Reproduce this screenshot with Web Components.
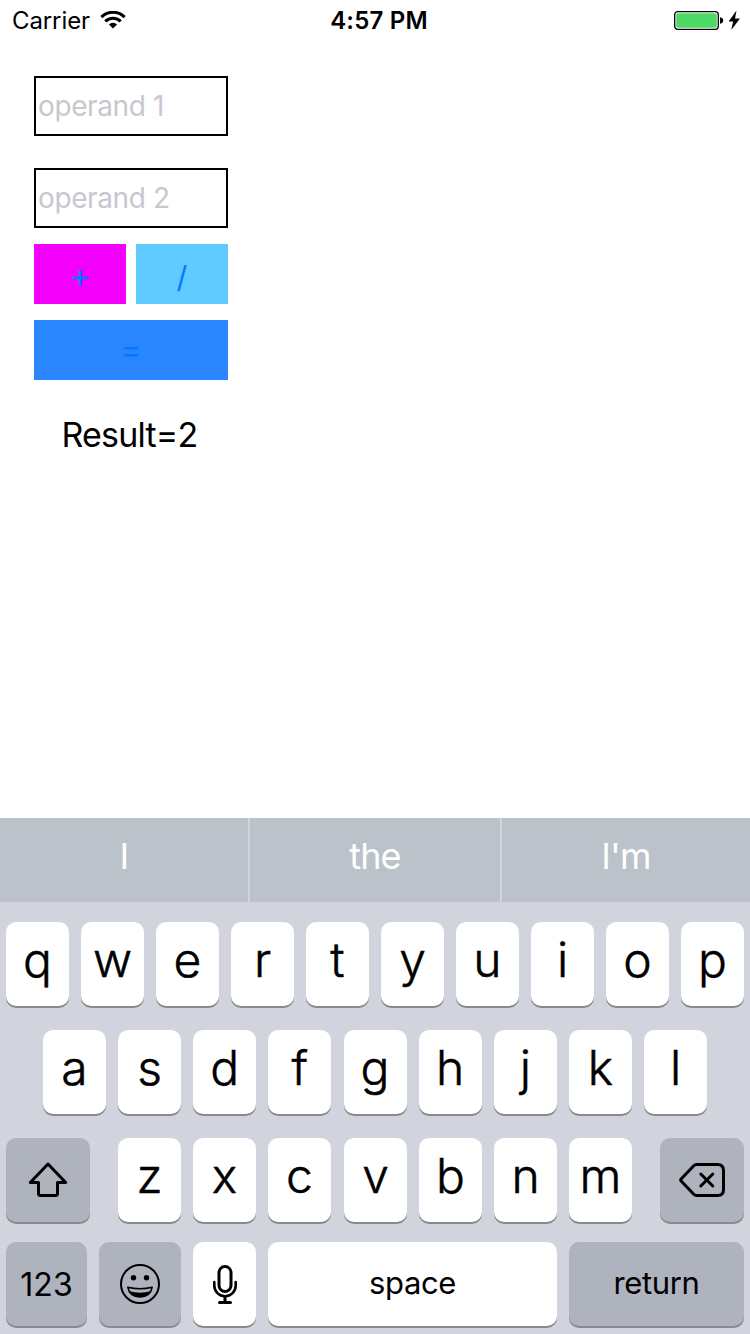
<!DOCTYPE html>
<html lang="en">
<head>
<meta charset="utf-8">
<title>Calculator</title>
<style>
html, body { margin: 0; padding: 0; background: #fff; }
body { width: 750px; height: 1334px; overflow: hidden; font-family: Inter, "Liberation Sans", sans-serif; color: #000; }
</style>
</head>
<body>
<calc-app></calc-app>
<script>
function define(name, html) {
  const template = document.createElement('template');
  template.innerHTML = html;
  customElements.define(name, class extends HTMLElement {
    constructor() {
      super();
      this.attachShadow({ mode: 'open' }).appendChild(template.content.cloneNode(true));
    }
  });
}

define('status-bar', `
<style>
:host { display: grid; grid-template-columns: 1fr auto 1fr; align-items: center; height: 40px; padding: 0 10px 0 12px; box-sizing: border-box; font-size: 24px; line-height: 38px; }
.left, .right { display: flex; align-items: center; }
.right { justify-content: flex-end; }
.carrier { letter-spacing: -0.1px; padding-top: 2px; }
.time { font-weight: 600; letter-spacing: 0.2px; padding: 2px 0 0 6px; }
.wifi { margin-left: 10px; }
svg { display: block; }
</style>
<div class="left"><span class="carrier">Carrier</span>
<svg class="wifi" width="26" height="18" viewBox="0 0 26 18"><g fill="none" stroke="#000" stroke-width="3"><path d="M1.4 6.1A16.2 16.2 0 0 1 24.6 6.1"/><path d="M5.3 10.4A10.8 10.8 0 0 1 20.7 10.4"/></g><path d="M13 17.6L8.9 13.4A6 6 0 0 1 17.1 13.4Z"/></svg></div>
<span class="time">4:57 PM</span>
<div class="right"><svg width="67" height="20" viewBox="0 0 67 20"><rect x="1.7" y="1.7" width="43.6" height="17.6" rx="3" fill="#fff" stroke="#000" stroke-width="1.3"/><rect x="3.2" y="3.2" width="40.6" height="14.6" rx="1.8" fill="#4cd964"/><path d="M47 7.2C49.6 7.4 50.2 9 50.2 10.4S49.6 13.4 47 13.7Z"/><path d="M63.5.5L55.6 11.5H60.2L58.2 20L67 8.6H62Z"/></svg></div>`);

define('operand-field', `
<style>
:host { display: flex; align-items: center; box-sizing: border-box; height: 60px; border: 2px solid #000; padding-left: 2px; font-size: 28px; color: #c7c7cd; letter-spacing: -0.4px; }
</style><slot></slot>`);

define('op-button', `
<style>
:host { display: flex; align-items: center; justify-content: center; height: 60px; font-size: var(--size, 32px); color: #007aff; background: var(--fill); padding-top: var(--drop, 0); padding-bottom: var(--lift, 0); box-sizing: border-box; }
</style><slot></slot>`);

define('calc-panel', `
<style>
:host { display: flex; flex-direction: column; width: 194px; margin: 36px 0 0 34px; }
operand-field + operand-field { margin-top: 32px; }
.ops { display: grid; grid-template-columns: 92px 92px; gap: 10px; margin: 16px 0; }
.result { margin-top: 32px; height: 46px; line-height: 46px; font-size: 34px; text-align: center; letter-spacing: -0.8px; white-space: nowrap; padding-right: 3px; }
</style>
<operand-field>operand 1</operand-field>
<operand-field>operand 2</operand-field>
<div class="ops"><op-button style="--fill:#f200fa;--drop:2px">+</op-button><op-button style="--fill:#5fcaff;--drop:5px;--size:30px">/</op-button></div>
<op-button style="--fill:#2a86ff;--lift:2px">=</op-button>
<div class="result">Result=2</div>`);

define('suggestion-bar', `
<style>
:host { display: grid; grid-template-columns: 248px 250px 248px; gap: 2px; height: 84px; background: #d1d4dc; }
span { background: #bbc2ca; color: #fff; font-size: 36px; line-height: 77px; text-align: center; letter-spacing: -0.9px; }
</style><span>I</span><span>the</span><span>I'm</span>`);

define('kb-key', `
<style>
:host { display: flex; align-items: center; justify-content: center; box-sizing: border-box; height: 84px; border-radius: 10px; background: #fff; box-shadow: 0 2px 0 #898a8d; font-size: 48px; font-weight: 300; -webkit-text-stroke: 0.5px #000; padding-bottom: 9px; }
:host([dark]) { background: #aeb3be; }
:host([text]) { font-size: 31px; font-weight: 400; -webkit-text-stroke: 0; padding-bottom: 3px; letter-spacing: -0.4px; }
:host([icon]) { padding: 0; }
</style><slot></slot>`);

define('icon-shift', `<style>:host, svg { display: block; }</style>
<svg width="42" height="36" viewBox="0 0 42 36" fill="none" stroke="#000" stroke-width="3" stroke-linejoin="round"><path d="M21 2L38.7 20.5H30.5V31.5Q30.5 33.5 28.5 33.5H13.5Q11.5 33.5 11.5 31.5V20.5H3.3Z"/></svg>`);
define('icon-delete', `<style>:host, svg { display: block; }</style>
<svg width="48" height="36" viewBox="0 0 48 36" fill="none" stroke="#000" stroke-width="3" stroke-linejoin="round" stroke-linecap="round"><path d="M18.5 2.5H39.5Q45.5 2.5 45.5 8.5V27.5Q45.5 33.5 39.5 33.5H18.5Q17 33.5 15.5 32L2.9 18.8Q2.2 18 2.9 17.2L15.5 4Q17 2.5 18.5 2.5Z"/><path d="M22.8 12L34.8 24M34.8 12L22.8 24"/></svg>`);
define('icon-emoji', `<style>:host, svg { display: block; }</style>
<svg width="42" height="42" viewBox="0 0 42 42"><circle cx="21" cy="21" r="19" fill="none" stroke="#000" stroke-width="2"/><circle cx="14.5" cy="14.7" r="2.7"/><circle cx="27.5" cy="14.7" r="2.7"/><path d="M8.8 24.2Q21 27.2 33.2 24.2Q31.5 34 21 34T8.8 24.2Z" fill="none" stroke="#000" stroke-width="1.6" stroke-linejoin="round"/><path d="M10 28Q21 31.5 32 28Q29 34 21 34T10 28Z"/></svg>`);
define('icon-mic', `<style>:host, svg { display: block; }</style>
<svg width="28" height="42" viewBox="0 0 28 42" fill="none" stroke="#000" stroke-width="3" stroke-linecap="round"><rect x="8" y="3.5" width="12" height="25" rx="6"/><path d="M3.3 19V22.5A10.7 10.7 0 0 0 24.7 22.5V19" stroke-width="2.6"/><path d="M14 33.5V39M8.5 39.5H19.5"/></svg>`);

define('key-board', `
<style>
:host { display: flex; flex-direction: column; height: 432px; box-sizing: border-box; padding: 20px 6px 0; gap: 24px; background: #d1d4dc; }
.row { display: grid; }
.one { grid-template-columns: repeat(10, 63px); gap: 12px; }
.two { grid-template-columns: repeat(9, 63px); justify-content: space-between; padding: 0 37px; }
.three { grid-template-columns: 84px 514px 84px; justify-content: space-between; }
.mid { display: grid; grid-template-columns: 63px 63px 64px 63px 63px 63px 63px; gap: 12px; }
.mid kb-key { width: 63px; }
.four { grid-template-columns: 81px 82px 63px 289px 175px; gap: 12px; margin-top: -4px; }
kb-key.num { font-size: 32px; padding: 1px 0 0; letter-spacing: 0; }
</style>
<div class="row one"><kb-key>q</kb-key><kb-key>w</kb-key><kb-key>e</kb-key><kb-key>r</kb-key><kb-key>t</kb-key><kb-key>y</kb-key><kb-key>u</kb-key><kb-key>i</kb-key><kb-key>o</kb-key><kb-key>p</kb-key></div>
<div class="row two"><kb-key>a</kb-key><kb-key>s</kb-key><kb-key>d</kb-key><kb-key>f</kb-key><kb-key>g</kb-key><kb-key>h</kb-key><kb-key>j</kb-key><kb-key>k</kb-key><kb-key>l</kb-key></div>
<div class="row three"><kb-key dark icon><icon-shift></icon-shift></kb-key><div class="mid"><kb-key>z</kb-key><kb-key>x</kb-key><kb-key>c</kb-key><kb-key>v</kb-key><kb-key>b</kb-key><kb-key>n</kb-key><kb-key>m</kb-key></div><kb-key dark icon><icon-delete></icon-delete></kb-key></div>
<div class="row four"><kb-key dark text class="num">123</kb-key><kb-key dark icon><icon-emoji></icon-emoji></kb-key><kb-key icon><icon-mic></icon-mic></kb-key><kb-key text>space</kb-key><kb-key dark text>return</kb-key></div>`);

define('calc-app', `
<style>
:host { display: flex; flex-direction: column; width: 750px; height: 1334px; }
suggestion-bar { margin-top: auto; flex: none; }
key-board { flex: none; }
</style>
<status-bar></status-bar><calc-panel></calc-panel><suggestion-bar></suggestion-bar><key-board></key-board>`);
</script>
</body>
</html>
